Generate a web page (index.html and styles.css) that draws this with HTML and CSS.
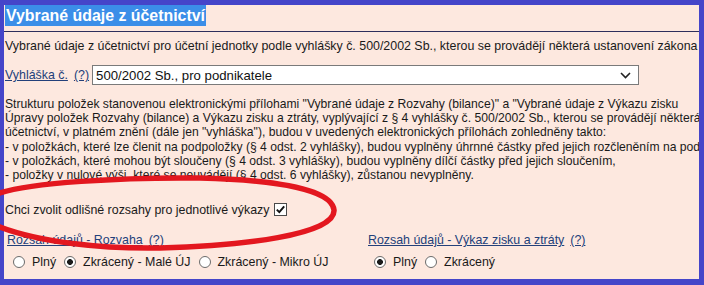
FILE: index.html
```html
<!DOCTYPE html>
<html lang="cs">
<head>
<meta charset="utf-8">
<title>Vybrané údaje z účetnictví</title>
<link rel="stylesheet" href="styles.css">
</head>
<body>
<div class="page">
  <div class="frame">
    <div class="content">
      <h1 class="title">Vybrané údaje z účetnictví</h1>
      <hr class="rule">
      <p class="intro">Vybrané údaje z účetnictví pro účetní jednotky podle vyhlášky č. 500/2002 Sb., kterou se provádějí některá ustanovení zákona č. 563/1991 Sb., o účetnictví</p>
      <div class="field">
        <a class="link" href="#">Vyhláška č.</a>
        <a class="link help" href="#">(?)</a>
        <div class="select">
          <span>500/2002 Sb., pro podnikatele</span>
          <svg class="chevron" width="11" height="7" viewBox="0 0 11 7"><path d="M1 1 L5.5 5.5 L10 1" fill="none" stroke="#222" stroke-width="1.6"/></svg>
        </div>
      </div>
      <p class="info">Strukturu položek stanovenou elektronickými přílohami "Vybrané údaje z Rozvahy (bilance)" a "Vybrané údaje z Výkazu zisku<br>Úpravy položek Rozvahy (bilance) a Výkazu zisku a ztráty, vyplývající z § 4 vyhlášky č. 500/2002 Sb., kterou se provádějí některá ustanovení zákona<br>účetnictví, v platném znění (dále jen "vyhláška"), budou v uvedených elektronických přílohách zohledněny takto:<br>- v položkách, které lze členit na podpoložky (§ 4 odst. 2 vyhlášky), budou vyplněny úhrnné částky před jejich rozčleněním na podpoložky,<br>- v položkách, které mohou být sloučeny (§ 4 odst. 3 vyhlášky), budou vyplněny dílčí částky před jejich sloučením,<br>- položky v nulové výši, které se neuvádějí (§ 4 odst. 6 vyhlášky), zůstanou nevyplněny.</p>
      <label class="toggle">Chci zvolit odlišné rozsahy pro jednotlivé výkazy<svg class="checkbox" width="13" height="13" viewBox="0 0 13 13"><rect x="0.5" y="0.5" width="12" height="12" fill="#fff" stroke="#4a4a4a"/><path d="M2.8 6.6 L5.3 9.2 L10.2 3.4" fill="none" stroke="#111" stroke-width="1.9"/></svg></label>
      <div class="ranges">
        <div class="range">
          <div class="range-head"><a class="link" href="#">Rozsah údajů - Rozvaha</a><a class="link help" href="#">(?)</a></div>
          <div class="options">
            <label class="opt"><input type="radio" name="rozvaha" class="radio">Plný</label>
            <label class="opt"><input type="radio" name="rozvaha" class="radio" checked>Zkrácený - Malé ÚJ</label>
            <label class="opt"><input type="radio" name="rozvaha" class="radio">Zkrácený - Mikro ÚJ</label>
          </div>
        </div>
        <div class="range">
          <div class="range-head"><a class="link" href="#">Rozsah údajů - Výkaz zisku a ztráty</a><a class="link help" href="#">(?)</a></div>
          <div class="options">
            <label class="opt"><input type="radio" name="vzz" class="radio" checked>Plný</label>
            <label class="opt"><input type="radio" name="vzz" class="radio">Zkrácený</label>
          </div>
        </div>
      </div>
    </div>
  </div>
  <svg class="annotation" width="704" height="285" viewBox="0 0 704 285">
    <path d="M334 210 C332 190 280 180 200 178 C120 177 30 183 0 193 C-20 200 -20 220 0 227 C40 242 100 249 160 248 C240 246 336 235 334 210 Z" fill="none" stroke="#e3171f" stroke-width="5.5"/>
  </svg>
</div>
</body>
</html>
```

FILE: styles.css
```css
body {
  margin: 0;
}

.page {
  position: relative;
  width: 704px;
  height: 285px;
  font-family: "Liberation Sans", Arial, sans-serif;
  font-size: 12.4px;
  color: #1a1a1a;
}

.frame {
  box-sizing: border-box;
  width: 704px;
  height: 285px;
  border-style: solid;
  border-color: #4545c9;
  border-width: 5px 5px 6px 4px;
  background: #fde8df;
  overflow: hidden;
}

.content {
  width: 1000px;
  padding-left: 1px;
}

.title {
  width: fit-content;
  margin: 0;
  padding: 0 1px;
  font-size: 15.9px;
  font-weight: bold;
  line-height: 21px;
  color: #fff;
  background: #3b8ee8;
}

.rule {
  width: 700px;
  height: 1px;
  margin: 5px 0 0 -1px;
  border: 0;
  background: #2e2e5c;
}

.intro {
  margin: 7px 0 0;
  line-height: 15px;
  white-space: nowrap;
}

.link {
  color: #23407a;
  text-decoration: underline;
}

.help {
  margin-left: 6px;
}

.field {
  display: flex;
  align-items: center;
  height: 20px;
  margin-top: 11px;
}

.select {
  box-sizing: border-box;
  display: flex;
  align-items: center;
  justify-content: space-between;
  width: 547px;
  height: 20px;
  margin-left: 3px;
  padding: 0 7px 0 3px;
  border: 1px solid #7a7a7a;
  background: #fff;
  font-size: 13.2px;
  color: #111;
}

.info {
  margin: 12px 0 0;
  font-size: 12.15px;
  line-height: 14.2px;
  white-space: nowrap;
}

.toggle {
  display: flex;
  align-items: center;
  height: 15px;
  margin-top: 20px;
}

.checkbox {
  margin-left: 5px;
}

.ranges {
  display: grid;
  grid-template-columns: 361px 361px;
  margin-top: 16px;
  padding-left: 2px;
}

.range-head {
  height: 15px;
  line-height: 15px;
}

.options {
  display: flex;
  align-items: center;
  height: 15px;
  margin-top: 6px;
  padding-left: 6px;
}

.opt {
  display: flex;
  align-items: center;
  margin-right: 8px;
}

.radio {
  appearance: none;
  box-sizing: border-box;
  width: 12px;
  height: 12px;
  margin: 0 7px 0 0;
  border: 1px solid #6b6b6b;
  border-radius: 50%;
  background: #fff;
}

.radio:checked {
  background: radial-gradient(circle, #1b1b1b 0 2.6px, #fff 3.2px);
}

.annotation {
  position: absolute;
  top: 0;
  left: 0;
  pointer-events: none;
}
```
